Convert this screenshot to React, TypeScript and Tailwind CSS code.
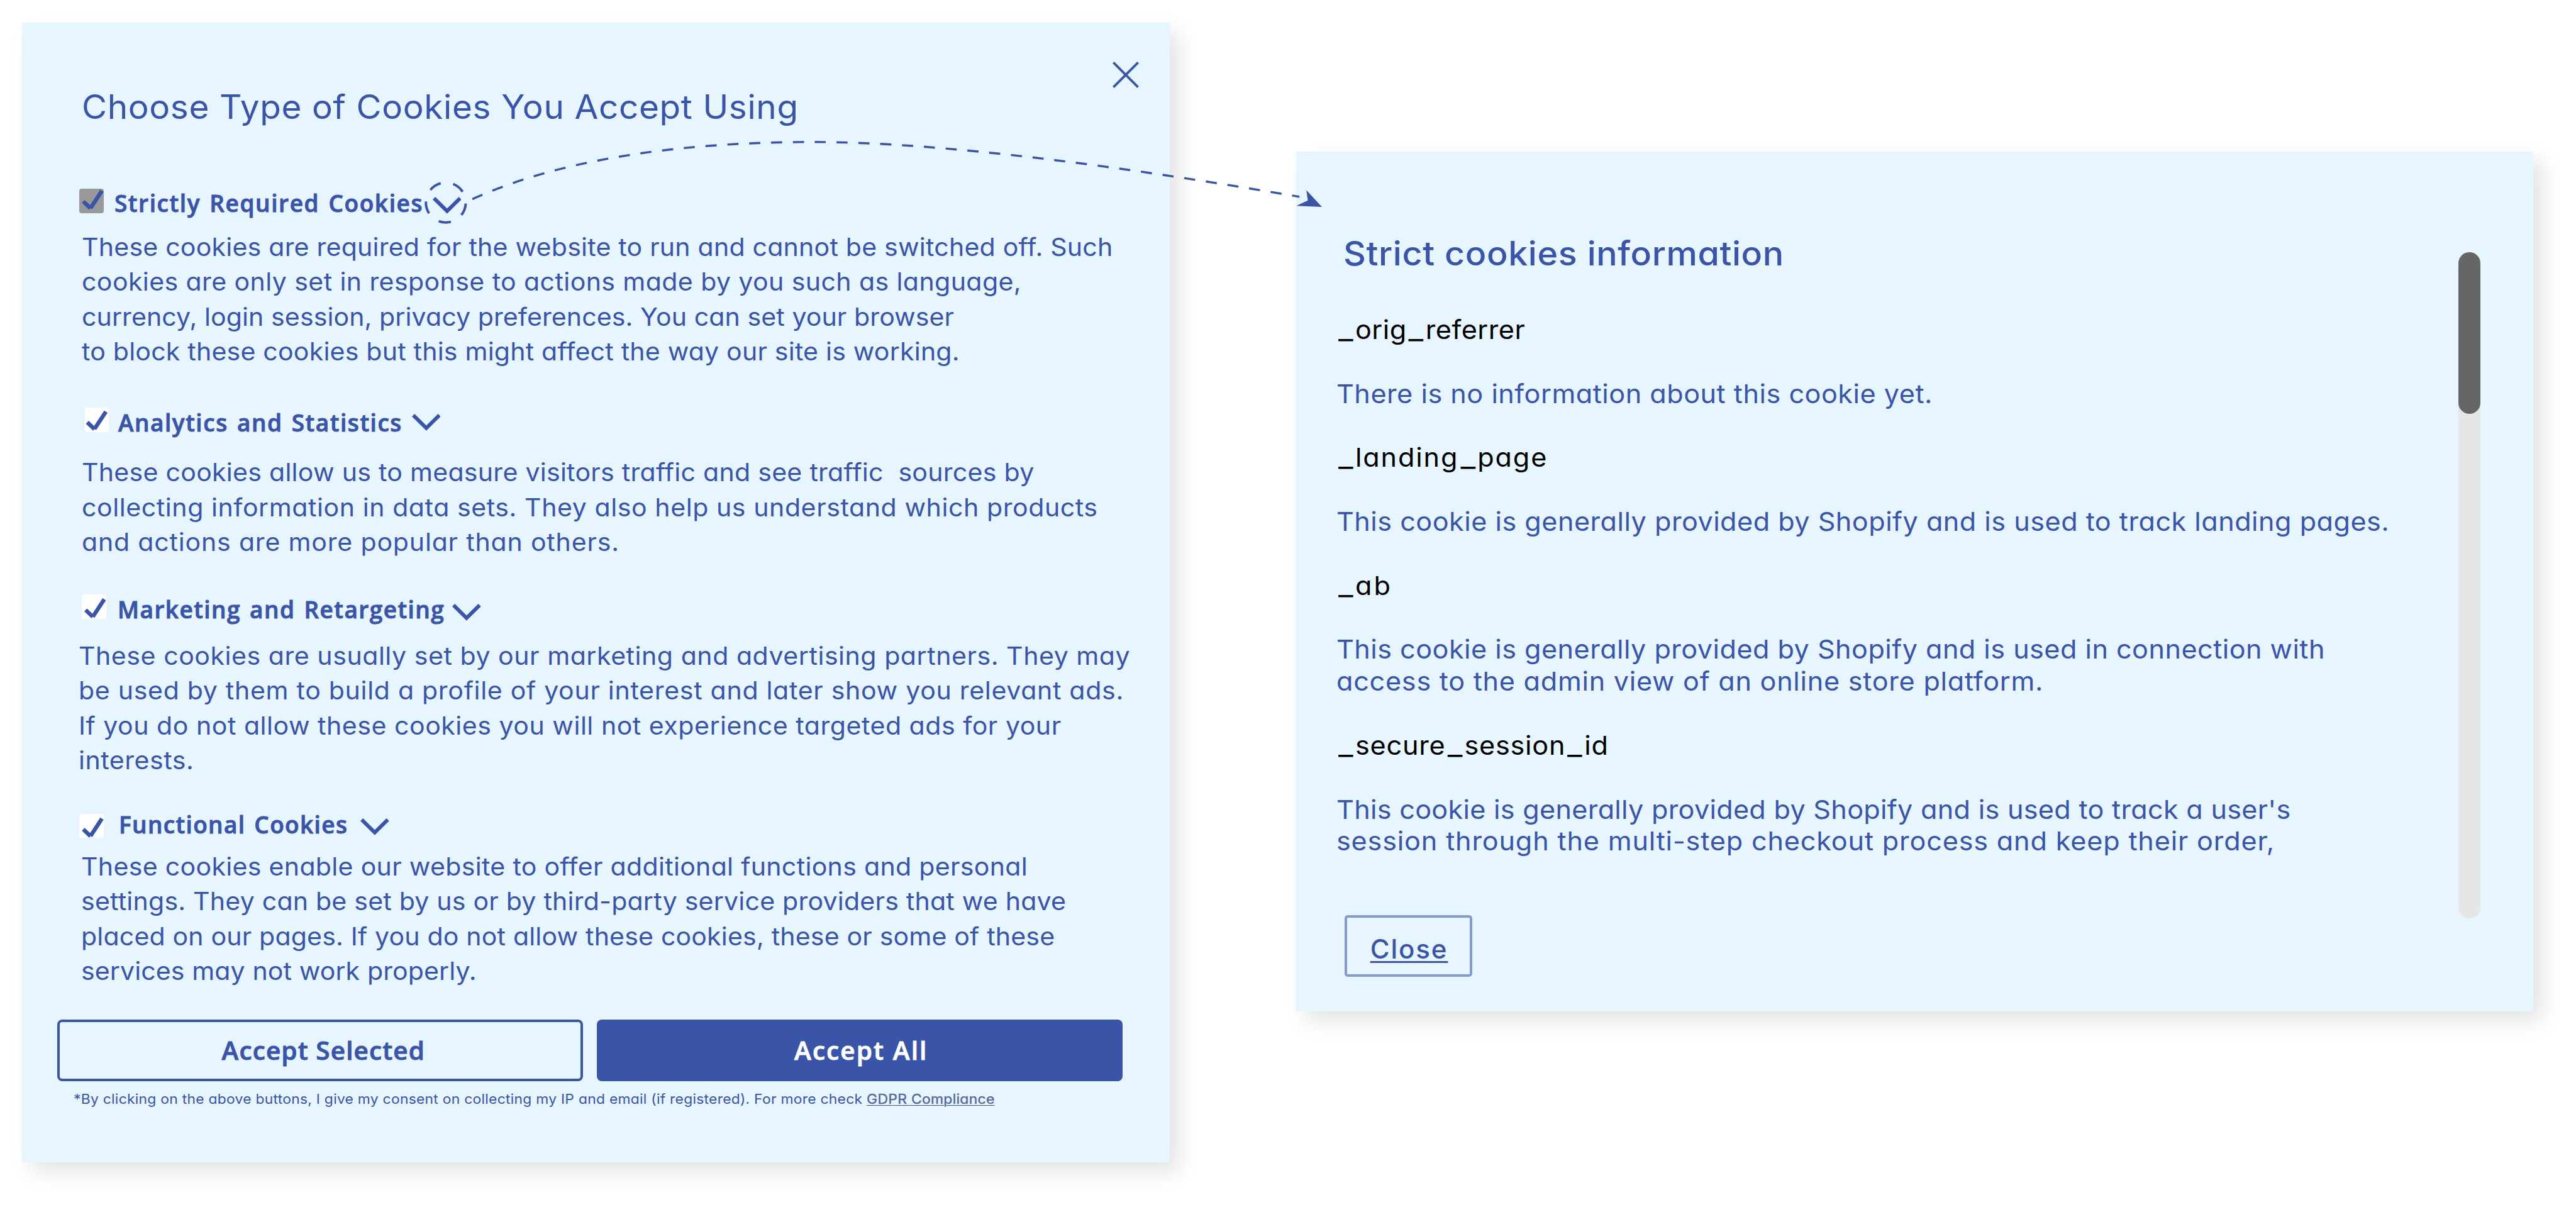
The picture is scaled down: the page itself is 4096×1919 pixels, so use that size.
import type { ReactNode } from 'react';

const BODY = "font-['Inter',sans-serif] [font-feature-settings:'cv11']";
const HEAD = "font-['Open_Sans',sans-serif] font-semibold [-webkit-text-stroke:0.9px_currentColor] [word-spacing:3px]";
const WIDE = 'origin-left scale-x-[1.04] whitespace-nowrap';

type Line = { text: string; track: string };

type Section = {
  title: string;
  row: string;
  titleBox: string;
  chevron: string;
  box: string;
  check: string;
  body: string;
  lines: Line[];
};

const sections: Section[] = [
  {
    title: 'Strictly Required Cookies',
    row: 'mt-[97.7px] pl-[91.3px]',
    titleBox: 'ml-[17.1px] w-[505.8px] tracking-[1.6px]',
    chevron: 'mt-[12.9px]',
    box: 'bg-[#999999]',
    check: 'translate(0 0)',
    body: 'mt-[20.9px] pl-[95px]',
    lines: [
      { text: 'These cookies are required for the website to run and cannot be switched off. Such', track: 'tracking-[0.2px]' },
      { text: 'cookies are only set in response to actions made by you such as language,', track: 'tracking-[0.38px]' },
      { text: 'currency, login session, privacy preferences. You can set your browser', track: 'tracking-[0.08px]' },
      { text: 'to block these cookies but this might affect the way our site is working.', track: 'tracking-[0.19px]' },
    ],
  },
  {
    title: 'Analytics and Statistics',
    row: 'mt-[60.3px] pl-[99.8px]',
    titleBox: 'ml-[14.6px] w-[466.7px] tracking-[1.55px]',
    chevron: 'mt-[9.6px]',
    box: 'bg-white',
    check: 'translate(-5 6)',
    body: 'mt-[31px] pl-[95px]',
    lines: [
      { text: 'These cookies allow us to measure visitors traffic and see traffic\u00a0 sources by', track: 'tracking-[0.25px]' },
      { text: 'collecting information in data sets. They also help us understand which products', track: 'tracking-[0.54px]' },
      { text: 'and actions are more popular than others.', track: 'tracking-[0.77px]' },
    ],
  },
  {
    title: 'Marketing and Retargeting',
    row: 'mt-[54.8px] pl-[95.3px]',
    titleBox: 'ml-[18.2px] w-[532.1px] tracking-[1.45px]',
    chevron: 'mt-[14.8px]',
    box: 'bg-white',
    check: 'translate(-0.5 8.5)',
    body: 'mt-[25.5px] pl-[90.1px]',
    lines: [
      { text: 'These cookies are usually set by our marketing and advertising partners. They may', track: 'tracking-[0.51px]' },
      { text: 'be used by them to build a profile of your interest and later show you relevant ads.', track: 'tracking-[0.66px]' },
      { text: 'If you do not allow these cookies you will not experience targeted ads for your', track: 'tracking-[0.49px]' },
      { text: 'interests.', track: 'tracking-[0.5px]' },
    ],
  },
  {
    title: 'Functional Cookies',
    row: 'mt-[49.3px] pl-[91.2px]',
    titleBox: 'ml-[24.3px] w-[384.2px] tracking-[1.35px]',
    chevron: 'mt-[13.3px]',
    box: 'mt-[6.4px] bg-white',
    check: 'translate(0 8)',
    body: 'mt-[18.7px] pl-[94.2px]',
    lines: [
      { text: 'These cookies enable our website to offer additional functions and personal', track: 'tracking-[0.29px]' },
      { text: 'settings. They can be set by us or by third-party service providers that we have', track: 'tracking-[0.2px]' },
      { text: 'placed on our pages. If you do not allow these cookies, these or some of these', track: 'tracking-[0.16px]' },
      { text: 'services may not work properly.', track: 'tracking-[0.09px]' },
    ],
  },
];

const cookies: { name: string; track: string; lines: Line[] }[] = [
  {
    name: '_orig_referrer',
    track: 'tracking-[0.5px]',
    lines: [{ text: 'There is no information about this cookie yet.', track: 'tracking-[0.49px]' }],
  },
  {
    name: '_landing_page',
    track: 'tracking-[1.8px]',
    lines: [{ text: 'This cookie is generally provided by Shopify and is used to track landing pages.', track: 'tracking-[0.47px]' }],
  },
  {
    name: '_ab',
    track: 'tracking-[3px]',
    lines: [
      { text: 'This cookie is generally provided by Shopify and is used in connection with', track: 'tracking-[0.45px]' },
      { text: 'access to the admin view of an online store platform.', track: 'tracking-[0.71px]' },
    ],
  },
  {
    name: '_secure_session_id',
    track: 'tracking-[0.75px]',
    lines: [
      { text: "This cookie is generally provided by Shopify and is used to track a user's", track: 'tracking-[0.28px]' },
      { text: 'session through the multi-step checkout process and keep their order,', track: 'tracking-[0.8px]' },
    ],
  },
];

function Lines({ lines }: { lines: Line[] }) {
  return (
    <>
      {lines.map((l) => (
        <div key={l.text} className={`${WIDE} ${l.track}`}>
          {l.text}
        </div>
      ))}
    </>
  );
}

function CheckBox({ className, shift }: { className: string; shift: string }) {
  return (
    <div className={`h-[38.6px] w-[38.5px] shrink-0 rounded-[4px] ${className}`}>
      <svg viewBox="0 0 72 72" className="size-full overflow-visible" fill="none" stroke="#3A54A8" strokeWidth="12">
        <g transform={shift}>
          <path d="M12 37.7 33.5 58.2" />
          <path d="M33.5 57.7 67.5 6" />
        </g>
      </svg>
    </div>
  );
}

function Chevron({ className }: { className: string }) {
  return (
    <svg viewBox="0 0 85.3 50.4" className={`h-[27px] w-[45.7px] shrink-0 ${className}`} fill="none" stroke="#3A54A8" strokeWidth="11">
      <path d="M3.9 3.9 42.7 42.4 81.5 3.9" />
    </svg>
  );
}

function CookieName({ name, track }: { name: string; track: string }) {
  const parts: ReactNode[] = name.split(/(_)/).map((p, i) =>
    p === '_' ? (
      <span key={i} className="inline-block w-[28.8px] pl-[3px] tracking-normal">
        <span className="inline-block origin-left scale-x-[1.2]">_</span>
      </span>
    ) : (
      p
    ),
  );
  return <div className={`${WIDE} h-[50.84px] text-black ${track}`}>{parts}</div>;
}

function Connector() {
  return (
    <svg
      viewBox="1250 400 2700 280"
      className="absolute top-[213.9px] left-[668.5px] h-[149.7px] w-[1443.9px]"
      fill="none"
      stroke="#3A54A8"
    >
      <circle cx="1324.2" cy="602" r="59.3" strokeWidth="7.4" strokeDasharray="37 37.52" transform="rotate(3 1324.2 602)" />
      <path
        d="M1403 592C1680 466 2050 422 2417 422C2800 422 3350 497 3863 585"
        strokeWidth="6.4"
        strokeDasharray="33 32"
      />
      <path d="M3930 615 3883.6 565 3888 596 3854 612Z" fill="#3A54A8" stroke="none" />
    </svg>
  );
}

export default function App() {
  return (
    <div className="relative flex h-[1919px] w-[4096px] items-start overflow-hidden bg-white text-[#3A54A8]">
      <section className="relative mt-[36px] ml-[35px] h-[1812px] w-[1825px] shrink-0 bg-[#E6F5FE] pt-[102.3px] shadow-[15px_15px_32px_rgba(0,0,0,0.11)]">
        <svg
          viewBox="0 0 42 42"
          className="absolute top-[62.4px] left-[1733.6px] size-[42px]"
          stroke="#3A54A8"
          strokeWidth="3.8"
        >
          <path d="M1.4 1.4 40.6 40.6M40.6 1.4 1.4 40.6" />
        </svg>
        <h1 className={`${BODY} ${WIDE} ml-[94.5px] text-[52.8px] leading-[64px] tracking-[0.58px]`}>
          Choose Type of Cookies You Accept Using
        </h1>
        {sections.map((s) => (
          <div key={s.title}>
            <div className={`flex h-[45px] items-start ${s.row}`}>
              <CheckBox className={s.box} shift={s.check} />
              <h2 className={`${HEAD} mt-[3.5px] text-[37px] leading-[40px] whitespace-nowrap ${s.titleBox}`}>{s.title}</h2>
              <Chevron className={s.chevron} />
            </div>
            <div className={`${BODY} text-[39.5px] leading-[55.5px] ${s.body}`}>
              <Lines lines={s.lines} />
            </div>
          </div>
        ))}
        <div className={`${HEAD} mt-[48px] ml-[56.4px] flex gap-[21.3px] text-[40.5px]`}>
          <button className="h-[98.2px] w-[835.9px] rounded-[8px] border-[4.6px] border-[#3A54A8] pl-[10px] tracking-[1.1px]">
            Accept Selected
          </button>
          <button className="h-[98.2px] w-[836.3px] rounded-[8px] bg-[#3A54A8] pl-[5px] tracking-[2.1px] text-white">Accept All</button>
        </div>
        <p className={`${BODY} ${WIDE} mt-[12.6px] ml-[81.5px] text-[22px] leading-[30px] tracking-[0.24px]`}>
          *By clicking on the above buttons, I give my consent on collecting my IP and email (if registered). For more check{' '}
          <a className="tracking-[0.3px] underline decoration-[#3A54A8] decoration-1 underline-offset-[2px] [-webkit-text-stroke:0.6px_#8b8f9c]">
            GDPR Compliance
          </a>
        </p>
      </section>

      <section
        className={`${BODY} mt-[240.7px] ml-[201.4px] flex h-[1366.9px] w-[1966.5px] shrink-0 justify-between bg-[#E6F5FE] shadow-[15px_15px_32px_rgba(0,0,0,0.11)]`}
      >
        <div className="pt-[130.3px] pl-[64px]">
          <h2 className={`${WIDE} ml-[11px] text-[53.5px] leading-[64px] font-medium tracking-[0.56px]`}>
            Strict cookies information
          </h2>
          <div className="mt-[64.1px] flex flex-col gap-[50.84px] text-[41.5px] leading-[50.84px]">
            {cookies.map((c) => (
              <div key={c.name} className="flex flex-col gap-[50.84px]">
                <CookieName name={c.name} track={c.track} />
                <div>
                  <Lines lines={c.lines} />
                </div>
              </div>
            ))}
          </div>
          <button className="mt-[92.2px] ml-[12.2px] h-[97.4px] w-[203.8px] rounded-[5px] border-[4px] border-[#859BCF] pt-[9px] pl-[2px] text-[42px] font-medium tracking-[1.9px] underline decoration-[2.5px] underline-offset-[4px]">
            Close
          </button>
        </div>
        <div className="mt-[160.4px] mr-[83.5px] h-[1059px] w-[35.5px] rounded-full bg-[#E6E6E6]">
          <div className="h-[256.7px] rounded-full bg-[#666666]" />
        </div>
      </section>

      <Connector />
    </div>
  );
}
